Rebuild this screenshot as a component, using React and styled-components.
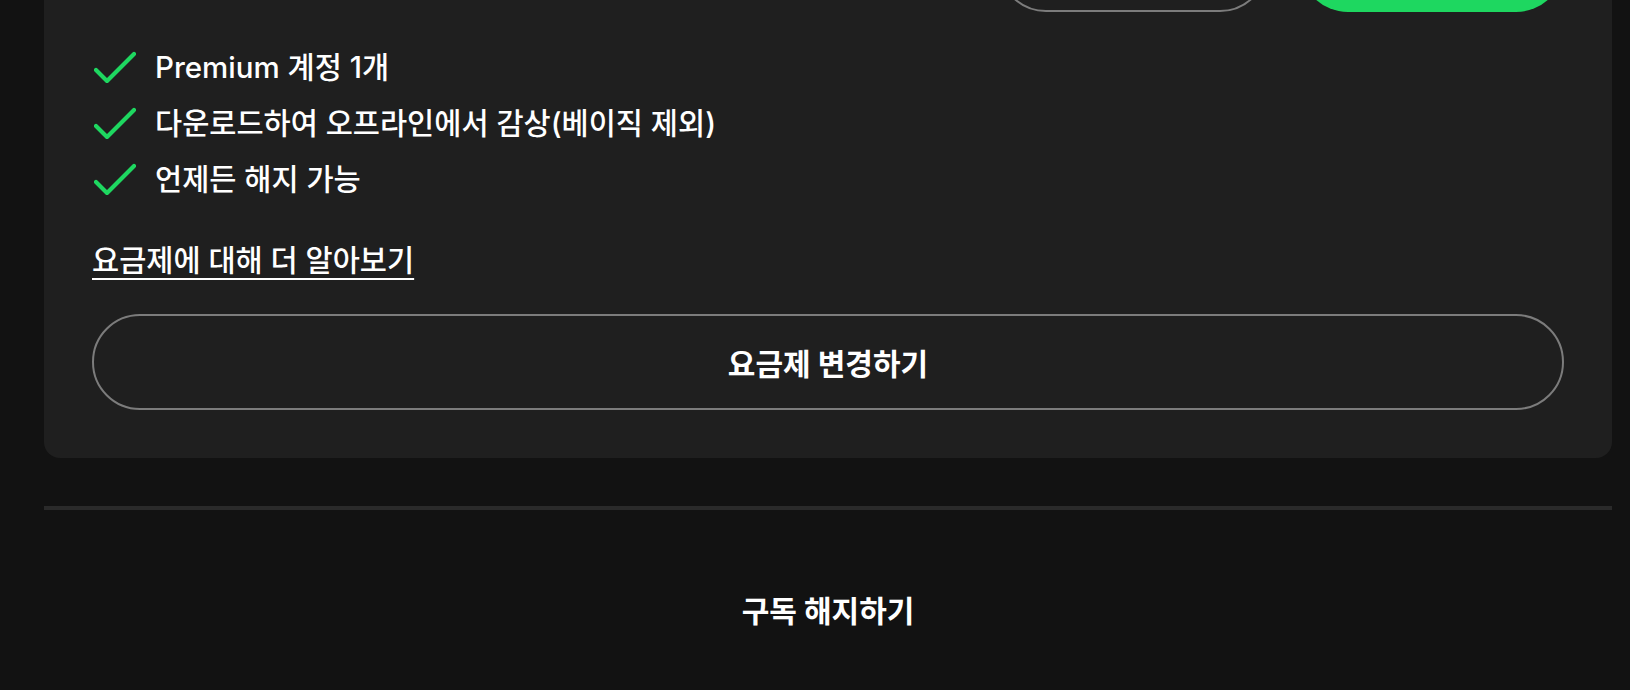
import React from "react";
import styled, { createGlobalStyle } from "styled-components";

const GlobalStyle = createGlobalStyle`
    html, body {
        margin: 0;
        padding: 0;
        background: #121212;
        overflow: hidden;
    }
    body {
        font-family: Inter, "Noto Sans CJK KR", "Noto Sans", sans-serif;
        color: #fff;
    }
`;

const Page = styled.main`
    width: 1630px;
    height: 690px;
    box-sizing: border-box;
    padding: 0 18px 0 44px;
    display: flex;
    flex-direction: column;
`;

const Card = styled.section`
    margin-top: -132px;
    background: #1f1f1f;
    border-radius: 16px;
    padding: 48px;
    display: flex;
    flex-direction: column;
`;

const Actions = styled.div`
    display: flex;
    justify-content: flex-end;
    gap: 32px;
`;

const PillButton = styled.button`
    width: ${({ $w }) => $w}px;
    height: 96px;
    border-radius: 48px;
    border: ${({ $primary }) => ($primary ? "none" : "2px solid #7c7c7c")};
    background: ${({ $primary }) => ($primary ? "#1ed760" : "transparent")};
    cursor: pointer;
`;

const Features = styled.ul`
    list-style: none;
    margin: 35px 0 0;
    padding: 0;
    display: flex;
    flex-direction: column;
    gap: 16px;
`;

const Feature = styled.li`
    display: flex;
    align-items: center;
    gap: 19px;
    height: 40px;
    font-size: 29.5px;
    line-height: 40px;
    font-weight: 500;
`;

const Check = styled.svg`
    width: 42px;
    height: 32px;
    flex-shrink: 0;
    margin-left: 2px;
`;

const LearnMore = styled.a`
    align-self: flex-start;
    margin-top: 41px;
    font-size: 29.5px;
    font-weight: 500;
    line-height: 40px;
    color: #fff;
    text-decoration: underline;
    text-decoration-thickness: 2px;
    text-underline-offset: 7px;
`;

const WideButton = styled.button`
    margin-top: 34px;
    height: 96px;
    border-radius: 48px;
    border: 2px solid #7c7c7c;
    background: transparent;
    color: #fff;
    font-family: inherit;
    font-size: 30px;
    font-weight: 700;
    cursor: pointer;
`;

const Divider = styled.hr`
    margin: 48px 0 0;
    border: none;
    height: 4px;
    background: #2a2a2a;
`;

const TextButton = styled.button`
    margin-top: 75px;
    align-self: center;
    height: 48px;
    border: none;
    background: transparent;
    color: #fff;
    font-family: inherit;
    font-size: 30px;
    font-weight: 700;
    cursor: pointer;
`;

const CheckIcon = () => (
  <Check viewBox="0 0 42 32" fill="none">
    <polyline
      points="2,19 13,30 40,3"
      stroke="#1ed760"
      strokeWidth="4.2"
      strokeLinecap="round"
      strokeLinejoin="round"
    />
  </Check>
);

const features = [
  "Premium 계정 1개",
  "다운로드하여 오프라인에서 감상(베이직 제외)",
  "언제든 해지 가능",
];

const App = () => {
  return (
    <>
      <GlobalStyle />
      <Page>
        <Card>
          <Actions>
            <PillButton $w={270} aria-label="secondary" />
            <PillButton $w={264} $primary aria-label="primary" />
          </Actions>
          <Features>
            {features.map((f) => (
              <Feature key={f}>
                <CheckIcon />
                {f}
              </Feature>
            ))}
          </Features>
          <LearnMore href="#">요금제에 대해 더 알아보기</LearnMore>
          <WideButton>요금제 변경하기</WideButton>
        </Card>
        <Divider />
        <TextButton>구독 해지하기</TextButton>
      </Page>
    </>
  );
};

export default App;
